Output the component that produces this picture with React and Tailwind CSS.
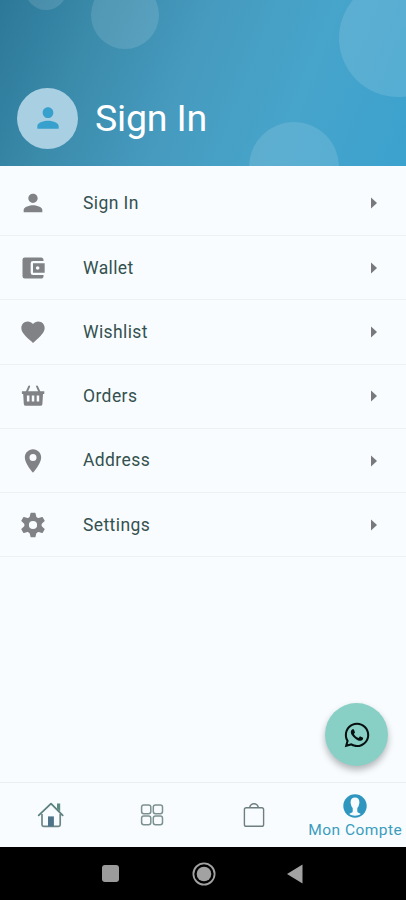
import React from 'react';
import {
  MdPerson,
  MdAccountBalanceWallet,
  MdFavorite,
} from 'react-icons/md';
import { FaWhatsapp } from 'react-icons/fa';

const BasketIcon = ({ className }) => (
  <svg viewBox="0 0 28 28" className={className} fill="none">
    <path d="M10.2 4.4 7.700 10M18 4.400 20.500 10" stroke="currentColor" strokeWidth="1.900" strokeLinecap="round" />
    <path
      fillRule="evenodd"
      fill="currentColor"
      d="M2.900 9.200h22.400v2.800h-1.300l-.6 9.900a2 2 0 0 1-2 1.900H6.800a2 2 0 0 1-2-1.900L4.200 12H2.900zM7.900 13.600v5.800h2.500v-5.800zM12.800 13.600v5.800h2.500v-5.800zM17.700 13.600v5.800h2.500v-5.800z"
    />
  </svg>
);

const PinIcon = ({ className }) => (
  <svg viewBox="0 0 24 24" className={className} fill="currentColor" fillRule="evenodd">
    <path d="M12 2C8.100 2 5 5.100 5 9c0 5.300 7 13 7 13s7-7.700 7-13c0-3.900-3.100-7-7-7zm0 10a3 3 0 1 1 0-6 3 3 0 0 1 0 6z" />
  </svg>
);

const teeth = [0, 60, 120, 180, 240, 300];

const GearIcon = ({ className }) => (
  <svg viewBox="0 0 28 28" className={className} fill="currentColor">
    <circle cx="14" cy="14" r="6.400" fill="none" stroke="currentColor" strokeWidth="4.600" />
    {teeth.map((angle) => (
      <path
        key={angle}
        d="M11.500 2.200q.1-.5.600-.5h3.800q.5 0 .6.500l1 4.300h-7z"
        transform={`rotate(${angle} 14 14)`}
      />
    ))}
  </svg>
);

const HomeIcon = () => (
  <svg viewBox="0 0 28 28" className="h-7 w-7" fill="none">
    <path d="M1.700 14.300 14 2.700l11.700 11.600" stroke="#5d7f7e" strokeWidth="1.800" strokeLinejoin="round" strokeLinecap="round" />
    <path d="M20 2.400h3.200v8.200L20 7.600z" fill="#5d8a82" />
    <path d="M5 13v10.700q0 1.600 1.600 1.600h15q1.600 0 1.600-1.600V13" stroke="#6d8586" strokeWidth="1.700" />
    <path d="M11 25.300v-9.900h5.900v9.900z" fill="#4f7389" />
  </svg>
);

const GridIcon = () => (
  <svg viewBox="0 0 24 24" className="h-6 w-6" fill="none" stroke="#7c908f" strokeWidth="1.500">
    <rect x="1.600" y="1.900" width="9.200" height="8.800" rx="2.200" />
    <rect x="13.300" y="1.900" width="9.200" height="8.800" rx="2.200" />
    <rect x="1.600" y="13" width="9.200" height="8.800" rx="2.200" />
    <rect x="13.300" y="13" width="9.200" height="8.800" rx="2.200" />
  </svg>
);

const BagIcon = () => (
  <svg viewBox="0 0 24 26" className="h-[26px] w-6" fill="none" stroke="#6f7f80" strokeWidth="1.400">
    <rect x="2.400" y="5.700" width="19.200" height="18.600" rx="1.900" />
    <path d="M7.500 5.700c.7-2.700 2.100-4 4.500-4s3.800 1.300 4.500 4" />
  </svg>
);

const AccountIcon = () => (
  <svg viewBox="0 0 24 24" className="h-6 w-6">
    <circle cx="12" cy="12" r="11.700" fill="#2f97bf" />
    <path
      fill="#f8fcff"
      d="M12 3.600c-2.900 0-4.400 1.900-4.400 4.600 0 1 .1 1.700.4 2.300.2 1.500.8 2.700 1.700 3.500v3.500c0 1-2 1.500-3.500 2.500 1.600 1.100 3.600 1.700 5.800 1.700s4.200-.6 5.800-1.700c-1.500-1-3.500-1.500-3.500-2.500V14c.9-.8 1.500-2 1.700-3.500.3-.6.4-1.300.4-2.300 0-2.700-1.500-4.600-4.400-4.600z"
    />
  </svg>
);

const menuItems = [
  { label: 'Sign In', icon: MdPerson },
  { label: 'Wallet', icon: MdAccountBalanceWallet },
  { label: 'Wishlist', icon: MdFavorite },
  { label: 'Orders', icon: BasketIcon },
  { label: 'Address', icon: PinIcon },
  { label: 'Settings', icon: GearIcon },
];

const ProfileHeader = () => (
  <header className="relative h-[166px] shrink-0 overflow-hidden bg-[linear-gradient(112deg,#2c7899_0%,#3b8bab_22%,#469bbf_46%,#47a4cb_72%,#3ba2ce_100%)]">
    {/* Decorative bubbles */}
    <div className="absolute -top-8 left-[25px] size-[42px] rounded-full bg-white/12" />
    <div className="absolute -top-[19px] left-[91px] size-[68px] rounded-full bg-white/12" />
    <div className="absolute -top-[21px] left-[339px] size-[118px] rounded-full bg-white/12" />
    <div className="absolute top-[122px] left-[249px] size-[90px] rounded-full bg-white/12" />

    <div className="relative flex items-center pt-[87.500px] pl-[17px]">
      <div className="flex size-[61px] items-center justify-center rounded-full bg-[#a9cfe2]">
        <MdPerson className="size-8 text-[#37a0cc]" />
      </div>
      <h1 className="ml-[17px] text-[37.5px] leading-[61px] tracking-[-0.2px] text-white">Sign In</h1>
    </div>
  </header>
);

const MenuRow = ({ label, icon: Icon }) => (
  <li className="flex h-[64.3px] items-center border-b-[1.5px] border-[#edf1f4] pl-[19px] pr-[29px]">
    <Icon className="size-7 text-[#808285]" />
    <span className="ml-9 flex-1 text-[17.5px] tracking-[0.4px] text-[#34514f]">{label}</span>
    <svg viewBox="0 0 6 12" className="h-3 w-1.5">
      <path d="M0 .5 6 6 0 11.500z" fill="#77797b" />
    </svg>
  </li>
);

const BottomNav = () => (
  <nav className="grid h-[65px] shrink-0 grid-cols-4 border-t border-[#e9eef1]">
    <div className="flex items-center justify-center">
      <HomeIcon />
    </div>
    <div className="flex items-center justify-center">
      <GridIcon />
    </div>
    <div className="flex items-center justify-center">
      <BagIcon />
    </div>
    <div className="flex flex-col items-center pt-[11px]">
      <AccountIcon />
      <span className="mt-0.5 whitespace-nowrap text-[15.5px] leading-5 tracking-[0.45px] text-[#3b9cbd]">Mon Compte</span>
    </div>
  </nav>
);

const SystemBar = () => (
  <div className="flex h-[53px] shrink-0 items-center bg-black pl-[102px]">
    <div className="size-[17px] rounded-[3px] bg-[#9b9b9b]" />
    <svg viewBox="0 0 24 24" className="ml-[73px] size-6">
      <circle cx="12" cy="12" r="10.600" fill="none" stroke="#a2a2a2" strokeWidth="1.800" />
      <circle cx="12" cy="12" r="7.300" fill="#a2a2a2" />
    </svg>
    <svg viewBox="0 0 16 20" className="ml-[71px] h-5 w-4">
      <path d="M0 10 15.500.5v19z" fill="#a2a2a2" />
    </svg>
  </div>
);

const App = () => {
  return (
    <div className="relative flex h-[900px] w-[406px] flex-col overflow-hidden bg-[#f8fcff] font-[Roboto,sans-serif]">
      <ProfileHeader />
      <ul className="flex-1 pt-[5.7px]">
        {menuItems.map((item) => (
          <MenuRow key={item.label} label={item.label} icon={item.icon} />
        ))}
      </ul>
      <BottomNav />
      <SystemBar />

      {/* Floating chat button */}
      <button className="absolute top-[703px] left-[325px] flex size-[63px] items-center justify-center rounded-full bg-[#88d0c5] shadow-[0_4px_7px_rgba(0,0,0,0.28)]">
        <FaWhatsapp className="size-7 text-[#06100f]" />
      </button>
    </div>
  );
};

export default App;
